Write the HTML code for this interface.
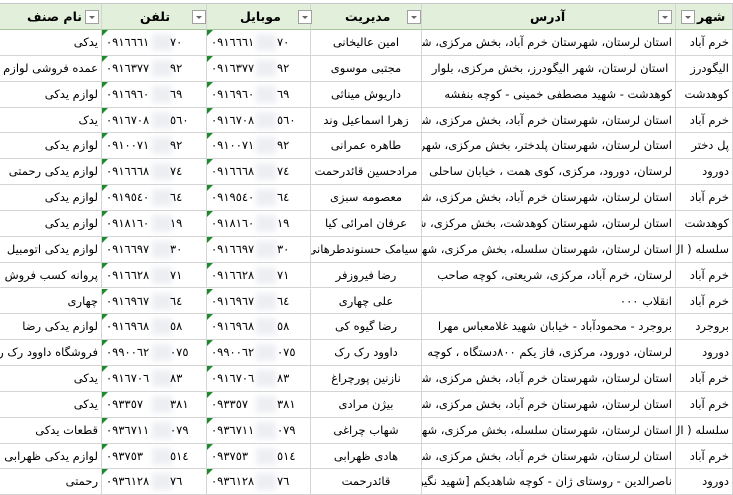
<!DOCTYPE html>
<html><head><meta charset="utf-8"><style>
*{margin:0;padding:0;box-sizing:border-box}
body{width:733px;height:494px;overflow:hidden;background:#fff;font-family:"DejaVu Sans",sans-serif;font-size:11.5px;color:#000;position:relative}
.top{position:absolute;left:0;top:0;width:733px;height:4px;background:#fff;border-bottom:1px solid #c6c6c6}
.hdr{position:absolute;top:4px;height:26px;background:#e2efda;border-right:1px solid #d4d4d4;border-bottom:1px solid #a9c4a0;font-weight:bold;font-size:12.5px;direction:rtl;line-height:26px;overflow:hidden;white-space:nowrap}
.dd{position:absolute;top:10px;width:14px;height:14px;background:#fff;border:1px solid #a0a0a0;z-index:3}
.dd:after{content:"";position:absolute;left:3px;top:5px;border-left:3.5px solid transparent;border-right:3.5px solid transparent;border-top:3.5px solid #666}
.c{position:absolute;height:25.85px;border-right:1px solid #d4d4d4;border-bottom:1px solid #d4d4d4;overflow:hidden;white-space:nowrap;line-height:25px;direction:rtl;padding:0 3px;background:#fff}
.n{direction:ltr;text-align:left;padding-left:4px;letter-spacing:0.5px}
.n:before{content:"";position:absolute;left:0;top:0;border-top:6px solid #1e8a2e;border-right:6px solid transparent}
.b{position:absolute;top:4px;height:17px;width:20px;background:#eceef2;filter:blur(3px)}
.ctr{text-align:center}
.ht{position:absolute;top:0}
</style></head><body>
<div class="top"></div>
<div id="g"></div>
<script>
var cols=[[676,57],[422,254],[311,111],[207,104],[102,105],[0,102]];
var heads=["شهر","آدرس","مدیریت","موبایل","تلفن","نام صنف"];
var htx=[697,530,345,240,140,27];
var ddx=[681,658,407,298,192,85];
var rows=[
["خرم آباد","استان لرستان، شهرستان خرم آباد، بخش مرکزی، شهر","امین عالیخانی","٠٩١٦٦٦١","٧٠","یدکی"],
["الیگودرز","&nbsp;استان لرستان،  شهر الیگودرز،  بخش مرکزی، بلوار","مجتبی موسوی","٠٩١٦٣٧٧","٩٢","عمده فروشی لوازم یدکی"],
["کوهدشت","کوهدشت - شهید مصطفی خمینی - کوچه بنفشه","داریوش میناثی","٠٩١٦٩٦٠","٦٩","لوازم یدکی"],
["خرم آباد","استان لرستان، شهرستان خرم آباد، بخش مرکزی، شهر","زهرا اسماعیل وند","٠٩١٦٧٠٨","٥٦٠","یدک"],
["پل دختر","استان لرستان، شهرستان پلدختر، بخش مرکزی، شهر","طاهره عمرانی","٠٩١٠٠٧١","٩٢","لوازم یدکی"],
["دورود","لرستان، دورود، مرکزی، کوی همت ، خیابان ساحلی","مرادحسین قائدرحمت","٠٩١٦٦٦٨","٧٤","لوازم یدکی رحمتی"],
["خرم آباد","استان لرستان، شهرستان خرم آباد، بخش مرکزی، شهر","معصومه سبزی","٠٩١٩٥٤٠","٦٤","لوازم یدکی"],
["کوهدشت","استان لرستان، شهرستان کوهدشت، بخش مرکزی، شهر","عرفان امرائی کیا","٠٩١٨١٦٠","١٩","لوازم یدکی"],
["سلسله ( ال","استان لرستان، شهرستان سلسله، بخش مرکزی، شهر","سیامک حسنوندطرهانی","٠٩١٦٦٩٧","٣٠","لوازم یدکی اتومبیل"],
["خرم آباد","لرستان، خرم آباد، مرکزی، شریعتی، کوچه صاحب","رضا فیروزفر","٠٩١٦٦٢٨","٧١","پروانه کسب فروش"],
["خرم آباد","انقلاب ٠٠٠","علی چهاری","٠٩١٦٩٦٧","٦٤","چهاری"],
["بروجرد","بروجرد - محمودآباد - خیابان شهید غلامعباس مهرا","رضا گیوه کی","٠٩١٦٩٦٨","٥٨","لوازم یدکی رضا"],
["دورود","لرستان، دورود، مرکزی، فاز یکم ٨٠٠دستگاه ، کوچه","داوود رک رک","٠٩٩٠٠٦٢","٠٧٥","فروشگاه داوود رک رک"],
["خرم آباد","استان لرستان، شهرستان خرم آباد، بخش مرکزی، شهر","نازنین پورچراغ","٠٩١٦٧٠٦","٨٣","یدکی"],
["خرم آباد","استان لرستان، شهرستان خرم آباد، بخش مرکزی، شهر","بیژن مرادی","٠٩٣٣٥٧","٣٨١","یدکی"],
["سلسله ( ال","استان لرستان، شهرستان سلسله، بخش مرکزی، شهر","شهاب چراغی","٠٩٣٦٧١١","٠٧٩","قطعات یدکی"],
["خرم آباد","استان لرستان، شهرستان خرم آباد، بخش مرکزی، شهر","هادی ظهرابی","٠٩٣٧٥٣","٥١٤","لوازم یدکی ظهرابی"],
["دورود","ناصرالدین - روستای ژان - کوچه شاهدیکم [شهید نگین آریائی","قائدرحمت","٠٩٣٦١٢٨","٧٦","رحمتی"]
];
var h="";
for(var i=0;i<6;i++){var x=cols[i][0],w=cols[i][1];
h+='<div class="hdr" style="left:'+x+'px;width:'+w+'px"><span class="ht" style="left:'+(htx[i]-x)+'px">'+heads[i]+'</span></div>';
h+='<div class="dd" style="left:'+ddx[i]+'px"></div>';}
for(var r=0;r<rows.length;r++){var y=(30+r*25.85).toFixed(2),d=rows[r];
for(var i=0;i<6;i++){var x=cols[i][0],w=cols[i][1];var cl="c",t;
if(i==3||i==4){cl+=" n";t='<span style="position:absolute;left:4px">'+d[3]+'</span><div class="b" style="left:'+(i==3?49:50)+'px"></div><span style="position:absolute;left:'+(i==3?70:68)+'px">'+d[4]+'</span>';}
else{t=d[i>4?5:i];if(i==2)cl+=" ctr";}
h+='<div class="'+cl+'" style="left:'+x+'px;top:'+y+'px;width:'+w+'px">'+t+'</div>';}}
document.getElementById("g").innerHTML=h;
</script>
</body></html>
